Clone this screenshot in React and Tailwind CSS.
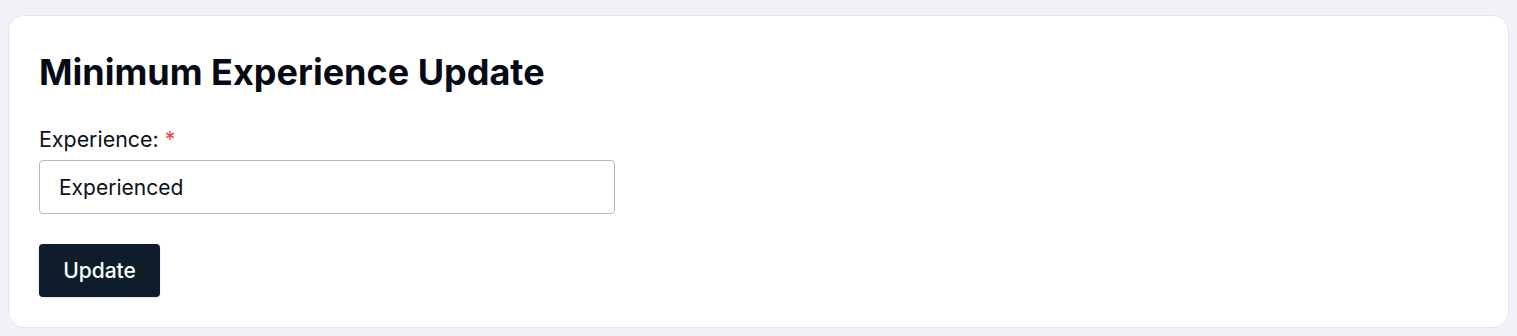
export default function App() {
  return (
    <div className="min-h-[336px] bg-[#f0f2f7] px-2 pt-[15px] pb-2 font-['Inter',sans-serif]">
      <div className="rounded-2xl border border-[#e3e6ec] bg-white px-[30px] pt-[30px] pb-[30px]">
        <h1 className="text-[36px] leading-[52px] font-bold text-[#060a14]">Minimum Experience Update</h1>
        <form className="mt-[27px]" onSubmit={(e) => e.preventDefault()}>
          <label className="block text-[21.4px] leading-7 font-normal text-[#0b0f19]">
            Experience: <span className="text-[#ef4444]">*</span>
          </label>
          <input
            type="text"
            defaultValue="Experienced"
            className="mt-[7px] block h-[54px] w-[576px] rounded border border-[#b5b7c0] px-[19px] text-[21px] text-[#0b0f19] outline-none"
          />
          <button
            type="submit"
            className="mt-[30px] h-[53px] w-[121px] rounded bg-[#0e1c2b] text-[21px] font-medium text-white shadow-sm"
          >
            Update
          </button>
        </form>
      </div>
    </div>
  )
}
